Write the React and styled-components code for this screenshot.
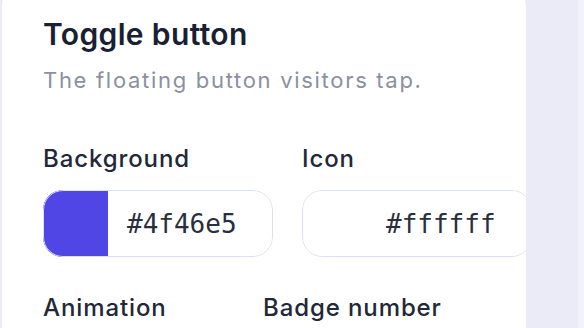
import React from "react";
import styled, { createGlobalStyle } from "styled-components";

const Global = createGlobalStyle`
  html, body { margin: 0; padding: 0; overflow: hidden; }
  body {
    background: #eaebf6;
    font-family: Inter, "Noto Sans", sans-serif;
    -webkit-font-smoothing: antialiased;
  }
`;

const Page = styled.div`
  display: flex;
  width: 584px;
  height: 328px;
  overflow: hidden;
`;

const Card = styled.section`
  flex: 0 0 524px;
  margin: -14px 0 0 2px;
  padding: 31px 0 0 41px;
  box-sizing: border-box;
  height: 360px;
  background: #ffffff;
  border-radius: 20px;
  overflow: hidden;
`;

const Gutter = styled.div`
  flex: 0 0 52px;
`;

const SidePanel = styled.div`
  flex: 1;
  background: #f1f2fa;
`;

const Title = styled.h2`
  margin: 0;
  font-size: 30px;
  line-height: 34px;
  font-weight: 600;
  color: #1a2033;
  letter-spacing: 0.35px;
`;

const Subtitle = styled.p`
  margin: 15px 0 0;
  font-size: 22px;
  line-height: 29px;
  color: #8a90a2;
  letter-spacing: 1.7px;
`;

const FieldRow = styled.div`
  display: grid;
  grid-template-columns: ${(p) => p.$cols};
  column-gap: 29px;
  margin-top: ${(p) => p.$top}px;
`;

const Field = styled.div`
  display: flex;
  flex-direction: column;
  gap: 17px;
`;

const Label = styled.label`
  font-size: 24px;
  line-height: 28px;
  font-weight: 500;
  color: #222838;
  letter-spacing: 0.9px;
  white-space: nowrap;
`;

const ColorInput = styled.div`
  position: relative;
  display: flex;
  align-items: center;
  height: 67px;
  border-radius: 20px;
  overflow: hidden;
  background: #ffffff;

  &::after {
    content: "";
    position: absolute;
    inset: 0;
    border: 1.5px solid #dcdff3;
    border-radius: 20px;
    pointer-events: none;
  }
`;

const Swatch = styled.span`
  flex: 0 0 65px;
  align-self: stretch;
  background: ${(p) => p.$color};
`;

const Hex = styled.span`
  padding-left: 19px;
  font-family: "DejaVu Sans Mono", "Liberation Mono", monospace;
  font-size: 26px;
  color: #2a2f3d;
`;

export default function App() {
  return (
    <>
      <Global />
      <Page>
        <Card>
          <Title>Toggle button</Title>
          <Subtitle>The floating button visitors tap.</Subtitle>
          <FieldRow $cols="230px 230px" $top={50}>
            <Field>
              <Label>Background</Label>
              <ColorInput>
                <Swatch $color="#4f46e5" />
                <Hex>#4f46e5</Hex>
              </ColorInput>
            </Field>
            <Field>
              <Label>Icon</Label>
              <ColorInput>
                <Swatch $color="#ffffff" />
                <Hex>#ffffff</Hex>
              </ColorInput>
            </Field>
          </FieldRow>
          <FieldRow $cols="191px 191px" $top={37}>
            <Field>
              <Label>Animation</Label>
            </Field>
            <Field>
              <Label>Badge number</Label>
            </Field>
          </FieldRow>
        </Card>
        <Gutter />
        <SidePanel />
      </Page>
    </>
  );
}
